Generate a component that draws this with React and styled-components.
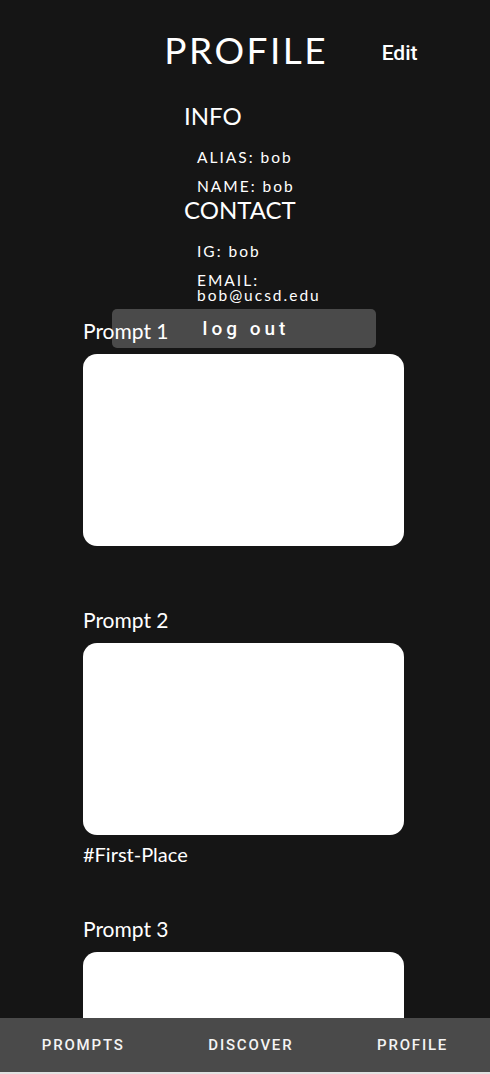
import styled, { createGlobalStyle } from "styled-components";

const GlobalStyle = createGlobalStyle`
  html, body {
    margin: 0;
    padding: 0;
    background: #151515;
  }
  * {
    box-sizing: border-box;
  }
`;

const prompts = [
  { title: "Prompt 1", tag: "" },
  { title: "Prompt 2", tag: "#First-Place" },
  { title: "Prompt 3", tag: "" },
];

const App = () => {
  return (
    <>
      <GlobalStyle />
      <Page>
        <Header>
          <span />
          <Title>PROFILE</Title>
          <EditButton>Edit</EditButton>
        </Header>

        <InfoBlock>
          <SectionHeading>INFO</SectionHeading>
          <InfoItem first>ALIAS: bob</InfoItem>
          <InfoItem>NAME: bob</InfoItem>
          <SectionHeading tight>CONTACT</SectionHeading>
          <InfoItem first>IG: bob</InfoItem>
          <InfoItem>EMAIL: bob@ucsd.edu</InfoItem>
        </InfoBlock>

        <LogoutButton>log out</LogoutButton>

        <PromptList>
          {prompts.map((p) => (
            <PromptSection key={p.title}>
              <PromptLabel>{p.title}</PromptLabel>
              <PromptCard />
              <Tag>{p.tag}</Tag>
            </PromptSection>
          ))}
        </PromptList>

        <NavBar>
          <NavItem>PROMPTS</NavItem>
          <NavItem>DISCOVER</NavItem>
          <NavItem>PROFILE</NavItem>
        </NavBar>
      </Page>
    </>
  );
};

export default App;

const Page = styled.div`
  min-height: 100vh;
  background: #151515;
  color: #fff;
  padding: 28px 0 80px;
  font-family: Lato, "Noto Sans", sans-serif;
`;

const Header = styled.div`
  display: grid;
  grid-template-columns: 1fr auto 1fr;
  align-items: center;
`;

const Title = styled.h1`
  margin: 0;
  font-size: 37px;
  line-height: 44px;
  font-weight: 400;
  letter-spacing: 2.5px;
  margin-right: -2.5px;
`;

const EditButton = styled.span`
  justify-self: start;
  margin: 6px 0 0 56px;
  font-family: Roboto, "Liberation Sans", Arial, sans-serif;
  font-size: 21px;
  font-weight: 500;
`;

const InfoBlock = styled.div`
  margin: 30px 0 0 184px;
  width: 150px;
  display: flex;
  flex-direction: column;
`;

const SectionHeading = styled.h2`
  margin: ${({ tight }) => (tight ? "2px 0 0" : "0")};
  font-size: 24px;
  line-height: 28px;
  font-weight: 400;
`;

const InfoItem = styled.p`
  margin: ${({ first }) => (first ? "20px" : "14px")} 0 0 13px;
  font-size: 15.5px;
  line-height: 15px;
  letter-spacing: 2px;
`;

const LogoutButton = styled.button`
  display: block;
  position: relative;
  width: 264px;
  height: 39px;
  margin: 6px 0 -29px 112px;
  border: none;
  border-radius: 5px;
  background: #4a4a4a;
  color: #fff;
  font-family: Roboto, "Liberation Sans", Arial, sans-serif;
  font-size: 19px;
  font-weight: 500;
  letter-spacing: 4px;
  text-indent: 4px;
  padding: 0;
`;

const PromptList = styled.div`
  display: flex;
  flex-direction: column;
  gap: 51px;
  padding: 0 86px 0 83px;
`;

const PromptSection = styled.section`
  display: flex;
  flex-direction: column;
`;

const PromptLabel = styled.div`
  position: relative;
  font-size: 21px;
  line-height: 24px;
  margin-bottom: 11px;
`;

const PromptCard = styled.div`
  height: 192px;
  background: #fff;
  border-radius: 14px;
`;

const Tag = styled.div`
  margin-top: 7px;
  min-height: 4px;
  font-size: 20px;
  line-height: 24px;
`;

const NavBar = styled.nav`
  position: fixed;
  left: 0;
  right: 0;
  bottom: 0;
  height: 56px;
  display: flex;
  justify-content: space-around;
  align-items: center;
  background: #4a4a4a;
  border-bottom: 2px solid #e2e2e2;
`;

const NavItem = styled.span`
  font-family: Roboto, "Liberation Sans", Arial, sans-serif;
  font-size: 15px;
  font-weight: 500;
  letter-spacing: 1.8px;
  color: #f4f4f4;
`;
